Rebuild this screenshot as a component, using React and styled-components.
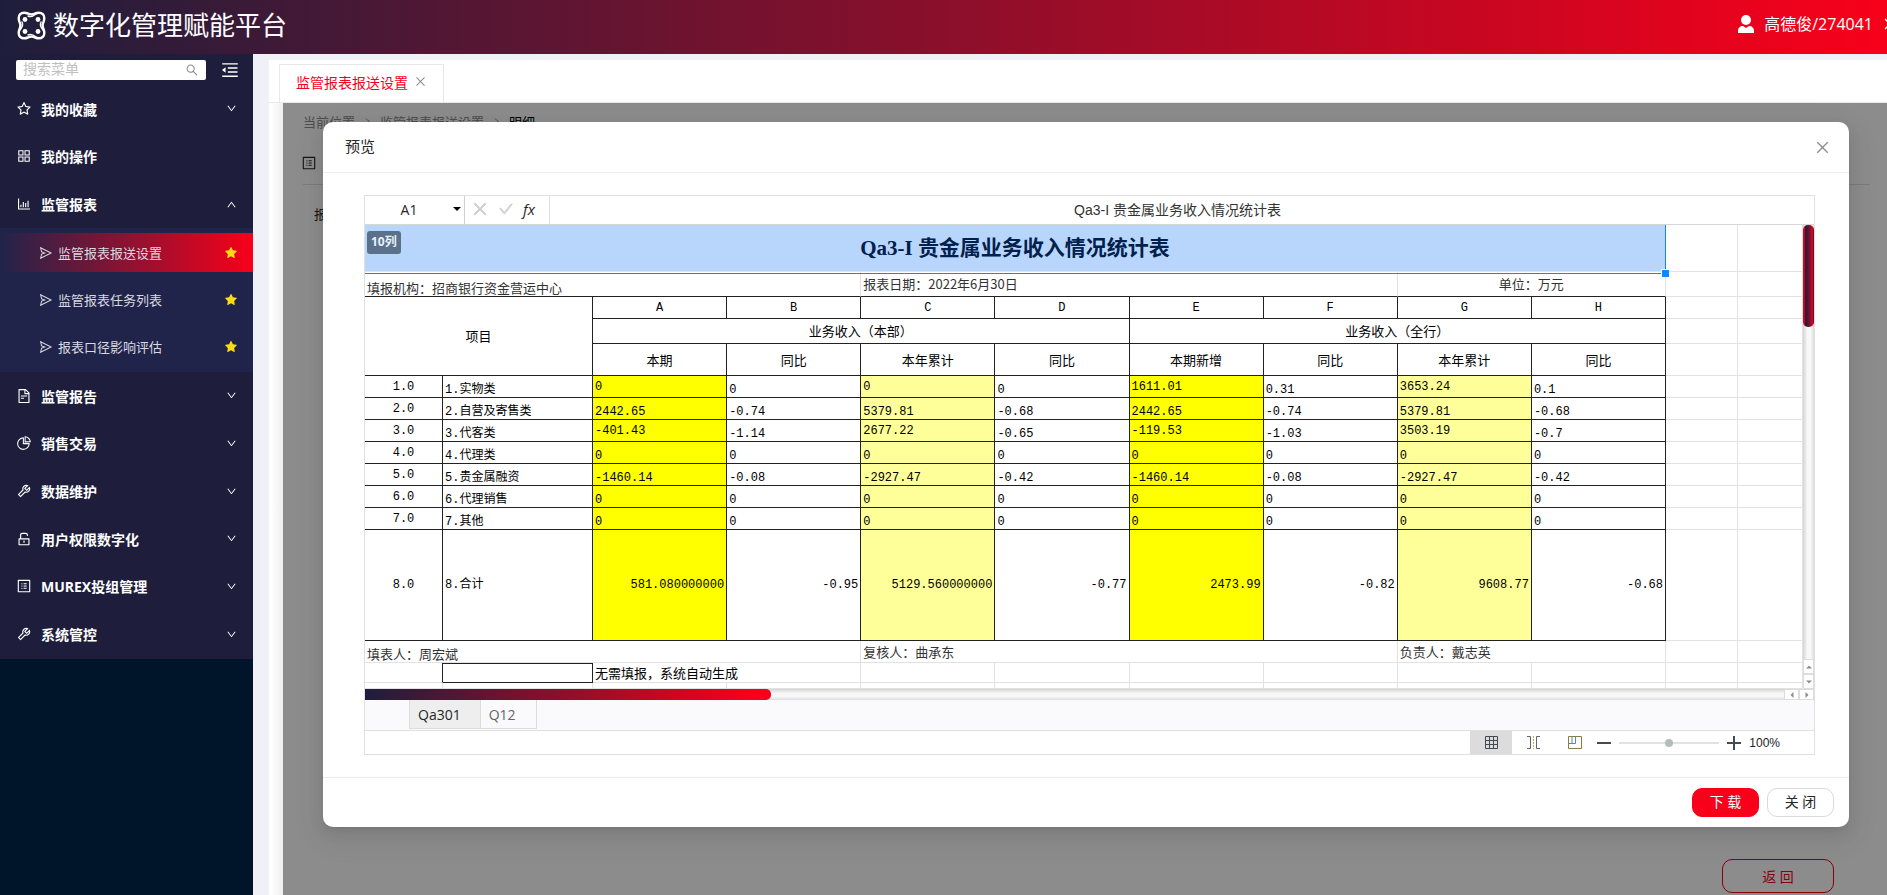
import React, { useState } from "react";
import styled, { createGlobalStyle, css } from "styled-components";
import {
    AiFillStar,
    AiOutlineAppstore,
    AiOutlineBarChart,
    AiOutlineCheck,
    AiOutlineClose,
    AiOutlineDown,
    AiOutlineFileText,
    AiOutlineMenuFold,
    AiOutlinePieChart,
    AiOutlineProfile,
    AiOutlineRight,
    AiOutlineSearch,
    AiOutlineSend,
    AiOutlineStar,
    AiOutlineTool,
    AiOutlineUnlock,
    AiOutlineUp,
} from "react-icons/ai";

const GlobalStyle = createGlobalStyle`
    * {
        box-sizing: border-box;
    }
    body {
        margin: 0;
        font-family: "Open Sans", "Noto Sans CJK SC", sans-serif;
        font-size: 14px;
        color: #262626;
        overflow: hidden;
    }
    button, input {
        font-family: inherit;
        padding: 0;
        margin: 0;
    }
    button {
        cursor: pointer;
    }
    svg {
        display: block;
        flex-shrink: 0;
    }
`;

const Layout = styled('div')`
    display: flex;
    flex-direction: column;
    height: 100vh;
`;

const Header = styled('header')`
    display: flex;
    align-items: center;
    justify-content: space-between;
    flex: 0 0 54px;
    padding: 0 0 4px 17px;
    overflow: hidden;
    color: #fff;
    background: linear-gradient(90deg, #1e1e3c 0%, #f8001a 100%);
`;

const Brand = styled('div')`
    display: flex;
    align-items: center;
    gap: 7px;
    h1 {
        margin: 0;
        font-size: 26px;
        line-height: 36px;
        font-weight: normal;
    }
`;

const User = styled('div')`
    display: flex;
    align-items: center;
    gap: 10px;
    margin-right: -11px;
    padding-bottom: 2px;
    font-size: 16px;
    line-height: 24px;
    .logout {
        margin-left: -1px;
    }
`;

const Main = styled('div')`
    display: flex;
    flex: 1;
    min-height: 0;
`;

const Sidebar = styled('aside')`
    flex: 0 0 253px;
    min-width: 0;
    background: #001529;
`;

const SearchRow = styled('div')`
    display: flex;
    align-items: center;
    gap: 14px;
    height: 31px;
    padding: 0 13px 0 16px;
    background: #1e1e3c;
    color: #fff;
`;

const SearchBox = styled('label')`
    display: flex;
    align-items: center;
    flex: 1;
    min-width: 0;
    height: 20px;
    padding: 0 7px;
    border-radius: 2px;
    background: #fff;
    color: #8c8c8c;
    input {
        flex: 1;
        min-width: 0;
        height: 20px;
        padding-bottom: 2px;
        border: none;
        outline: none;
        background: none;
        font-size: 14px;
    }
    input::placeholder {
        color: #bfbfbf;
    }
`;

const PlainButton = styled('button')`
    border: none;
    background: none;
    color: inherit;
    line-height: 0;
`;

const Menu = styled('nav')`
    padding-bottom: 1px;
    background: #1e1e3c;
`;

const MenuGroup = styled('div')`
    display: grid;
    grid-auto-rows: 1fr;
    height: ${p => p.$height}px;
`;

const MenuItem = styled('button')`
    display: flex;
    align-items: center;
    gap: 9px;
    width: 100%;
    padding: 0 16px;
    border: none;
    background: none;
    color: #fff;
    font-size: 14px;
    font-weight: bold;
    text-align: left;
    span {
        flex: 1;
    }
`;

const SubMenu = styled('div')`
    display: grid;
    gap: 8px;
    padding: 5px 0 6px;
    background: #21244a;
`;

const SubItem = styled('a')`
    display: flex;
    align-items: center;
    gap: 5px;
    height: 39px;
    padding: 0 15px 0 39px;
    font-size: 13px;
    color: #d9d9e0;
    text-decoration: none;
    background: ${p => p.$active ? 'linear-gradient(90deg, #21244a 0%, #f8001a 100%)' : 'none'};
    span {
        flex: 1;
    }
    .star {
        color: #fadb14;
    }
`;

const Workspace = styled('main')`
    display: flex;
    flex-direction: column;
    flex: 1;
    min-width: 0;
    padding: 6px 0 0 16px;
    background: #f0f1f6;
`;

const TabBar = styled('div')`
    flex: 0 0 43px;
    display: flex;
    padding: 4px 0 0 10px;
    background: #fff;
    border-bottom: 1px solid #e8e8e8;
`;

const PageTab = styled('div')`
    display: flex;
    align-items: center;
    gap: 6px;
    height: 38px;
    padding: 0 16px 4px 16px;
    border: 1px solid #e8e8e8;
    border-bottom: none;
    background: #fff;
    color: #f8001a;
    font-size: 14px;
    button {
        color: #8c8c8c;
    }
`;

const Stage = styled('div')`
    flex: 1;
    min-height: 0;
    padding-left: 14px;
    background: linear-gradient(90deg, #fff 0, #fff 2px, #eee 14px);
`;

const Page = styled('section')`
    position: relative;
    height: 100%;
    padding: 8px 17px 0 20px;
    display: flex;
    flex-direction: column;
    background: #fff;
`;

const Breadcrumb = styled('div')`
    display: flex;
    align-items: center;
    gap: 8px;
    height: 20px;
    font-size: 13px;
    color: #8c8c8c;
    strong {
        font-weight: normal;
        color: #000;
    }
`;

const PageHead = styled('div')`
    margin-top: 24px;
    height: 30px;
    border-bottom: 1px solid #e0e0e0;
    svg {
        margin-left: -2px;
    }
`;

const PageField = styled('div')`
    flex: 1;
    padding: 19px 11px;
    font-size: 13px;
`;

const PageFoot = styled('div')`
    display: flex;
    justify-content: flex-end;
    padding: 0 36px 2px 0;
`;

const BackButton = styled('button')`
    width: 112px;
    height: 34px;
    border: 1px solid #f8001a;
    border-radius: 10px;
    background: #fff;
    color: #f8001a;
    font-size: 14px;
`;

// the mask only covers the page, the menu and the tabs stay usable
const Mask = styled('div')`
    position: absolute;
    inset: 0;
    padding: 19px 38px 0 40px;
    background: rgba(0, 0, 0, 0.45);
`;

const Dialog = styled('div')`
    border-radius: 10px;
    background: #fff;
    box-shadow: 0 3px 6px -4px rgba(0, 0, 0, 0.12), 0 6px 16px rgba(0, 0, 0, 0.08),
        0 9px 28px 8px rgba(0, 0, 0, 0.05);
`;

const DialogHead = styled('div')`
    display: flex;
    align-items: center;
    justify-content: space-between;
    height: 51px;
    padding: 0 18px 0 22px;
    border-bottom: 1px solid #ececec;
    h2 {
        margin: 0;
        padding-bottom: 3px;
        font-size: 15px;
        font-weight: normal;
    }
    button {
        color: #8c8c8c;
    }
`;

const DialogBody = styled('div')`
    padding: 22px 34px 22px 41px;
`;

const DialogFoot = styled('div')`
    display: flex;
    justify-content: flex-end;
    gap: 8px;
    padding: 10px 15px;
    border-top: 1px solid #ececec;
`;

const ActionButton = styled('button')`
    width: 67px;
    height: 29px;
    padding-bottom: 2px;
    border: 1px solid ${p => p.$primary ? '#f8001a' : '#d9d9d9'};
    border-radius: 10px;
    background: ${p => p.$primary ? '#f8001a' : '#fff'};
    color: ${p => p.$primary ? '#fff' : '#262626'};
    font-size: 14px;
    line-height: 20px;
`;

const Spreadsheet = styled('div')`
    border: 1px solid #e0e0e0;
    color: #000;
`;

const FormulaBar = styled('div')`
    display: flex;
    height: 29px;
    border-bottom: 1px solid #d4d8d8;
`;

const NameBox = styled('div')`
    display: flex;
    align-items: center;
    width: 100px;
    padding: 0 3px 2px 0;
    border-right: 1px solid #d0d0d0;
    input {
        flex: 1;
        min-width: 0;
        border: none;
        outline: none;
        text-align: center;
        font-size: 14px;
        color: #262626;
    }
`;

const FormulaTools = styled('div')`
    display: flex;
    align-items: center;
    gap: 9px;
    width: 85px;
    padding: 0 0 2px 6px;
    border-right: 1px solid #e0e0e0;
    color: #d0d0d0;
    svg {
        stroke: currentColor;
        stroke-width: 50px;
    }
    em {
        font-size: 15px;
        line-height: 20px;
        color: #262626;
    }
`;

const FormulaInput = styled('input')`
    flex: 1;
    min-width: 0;
    height: 25px;
    padding-right: 9px;
    border: none;
    outline: none;
    text-align: center;
    font-family: "Liberation Sans", "Noto Sans CJK SC", sans-serif;
    font-size: 14px;
    color: #333;
`;

const SheetView = styled('div')`
    display: flex;
    height: 464px;
`;

const Grid = styled('table')`
    flex: 1;
    min-width: 0;
    width: 100%;
    height: 464px;
    table-layout: fixed;
    border-collapse: separate;
    border-spacing: 0;
`;

const Row = styled('tr')`
    height: ${p => p.$h}px;
`;

const Cell = styled('td')`
    position: relative;
    padding: 0 2px;
    border-right: 1px solid ${p => p.$line || '#e2e2e2'};
    border-bottom: 1px solid ${p => p.$base || p.$line || '#e2e2e2'};
    text-align: ${p => p.$align || 'left'};
    vertical-align: ${p => p.$valign || 'middle'};
    background: ${p => p.$fill || '#fff'};
    font-size: 13px;
    line-height: 16px;
    font-weight: normal;
    white-space: nowrap;
    ${p => p.$num && css`
        font-family: "Liberation Mono", "Noto Sans CJK SC", monospace;
        font-size: 12px;
        line-height: 14px;
    `}
    ${p => p.$note && css`
        color: #333;
        font-family: "Noto Sans CJK SC", sans-serif;
    `}
    ${p => p.$boxed && css`
        border-top: 1px solid #222;
    `}
`;

const TitleCell = styled(Cell)`
    border-right-color: #fff;
    background: #b8d6fb;
    color: #00204d;
    font-family: "Liberation Serif", "Noto Sans CJK SC", serif;
    font-size: 21px;
    line-height: 30px;
    font-weight: bold;
    text-align: center;
`;

const Selection = styled('div')`
    position: absolute;
    z-index: 1;
    inset: 0 -1px -3px 0;
    border-right: 1px solid #0f87ff;
    border-bottom: 1px solid #0f87ff;
    &::after {
        content: "";
        position: absolute;
        right: -4px;
        bottom: -4px;
        width: 7px;
        height: 7px;
        background: #0f87ff;
        border: 1px solid #fff;
        border-width: 1px 0 0 1px;
    }
`;

const ColumnBadge = styled('span')`
    position: absolute;
    top: 6px;
    left: 2px;
    height: 23px;
    padding: 0 4px;
    border-radius: 3px;
    background: #5b7089;
    color: #e8f1fb;
    font-family: "Open Sans", "Noto Sans CJK SC", sans-serif;
    font-size: 12px;
    line-height: 21px;
`;

const VScroll = styled('div')`
    display: flex;
    flex-direction: column;
    flex: 0 0 11px;
    background: linear-gradient(90deg, #d4d4d4, #f8f8f8 40%, #f8f8f8 70%, #dcdcdc);
`;

const VThumb = styled('div')`
    height: 102px;
    margin-bottom: auto;
    border-radius: 5px;
    background: linear-gradient(90deg, #e3001b 0%, #d4001b 14%, #1e1e3c 24%, #6a1430 55%, #e3001b 86%, #1e1e3c 100%);
`;

const HScroll = styled('div')`
    display: flex;
    height: 11px;
    background: linear-gradient(180deg, #d4d4d4, #f8f8f8 40%, #f8f8f8 70%, #dcdcdc);
`;

const HThumb = styled('div')`
    width: 28%;
    margin-right: auto;
    border-radius: 0 5px 5px 0;
    background: linear-gradient(90deg, #1e1e3c 0%, #f8001a 95%);
`;

const ScrollButton = styled('button')`
    display: flex;
    align-items: center;
    justify-content: center;
    width: ${p => p.$tall ? 11 : 15}px;
    height: ${p => p.$tall ? 15 : 11}px;
    border: 1px solid #dcdcdc;
    background: #fff;
    color: #8c8c8c;
`;

const SheetTabs = styled('div')`
    display: flex;
    height: 31px;
    padding-left: 44px;
    border-bottom: 1px solid #e0e0e0;
    background: #fafafc;
`;

const SheetTab = styled('button')`
    height: 29px;
    padding: 0 ${p => p.$active ? 19 : 20}px 0 8px;
    border: 1px solid #dcdcdc;
    border-top: none;
    border-left-width: ${p => p.$active ? 1 : 0}px;
    background: ${p => p.$active ? '#eee' : '#fafafc'};
    color: ${p => p.$active ? '#262626' : '#666'};
    font-size: 14px;
`;

const StatusBar = styled('div')`
    display: flex;
    justify-content: flex-end;
    align-items: center;
    height: 23px;
    padding-right: 34px;
    color: #434a54;
`;

const ViewButton = styled('button')`
    display: flex;
    align-items: center;
    justify-content: center;
    width: 42px;
    height: 23px;
    border: none;
    background: ${p => p.$active ? '#dcdcdc' : '#fff'};
`;

const Zoom = styled('div')`
    display: flex;
    align-items: center;
    gap: 8px;
    margin-left: 1px;
    font-family: "Liberation Sans", sans-serif;
    font-size: 12px;
    color: #222;
    input {
        appearance: none;
        width: 100px;
        height: 15px;
        background: linear-gradient(#dfe3e8, #dfe3e8) center / 100% 2px no-repeat;
    }
    input::-webkit-slider-thumb {
        appearance: none;
        width: 8px;
        height: 8px;
        border-radius: 50%;
        background: #b4bdb8;
    }
`;

const Logo = () => (
    <svg width="29" height="29" viewBox="0 0 29 29" fill="none" stroke="#fff" strokeWidth="2.400" strokeLinecap="round">
        <path d="M2.500 11 C0 4 4 0 11 2.500 C13 3.500 16 3.500 18 2.500 C25 0 29 4 26.500 11 C25.500 13 25.500 16 26.500 18 C29 25 25 29 18 26.500 C16 25.500 13 25.500 11 26.500 C4 29 0 25 2.500 18 C3.500 16 3.500 13 2.500 11 Z" />
        <path d="M11 5 C13 6 16 5.500 19 3 M11 24 C13 23 16 23.500 19 26" strokeWidth="1.400" />
        <path d="M5 11 C6 13 5.500 16 3 19 M24 11 C23 13 23.500 16 26 19" strokeWidth="1.400" />
        <g fill="#fff" stroke="none">
            <circle cx="8" cy="8.500" r="2.400" />
            <circle cx="21" cy="8.500" r="2.400" />
            <circle cx="8" cy="20.500" r="2.400" />
            <circle cx="21" cy="20.500" r="2.400" />
        </g>
    </svg>
);

const Person = () => (
    <svg width="16" height="18" viewBox="0 0 16 18" fill="#fff">
        <circle cx="8" cy="5" r="5" />
        <path d="M0 18 V16 C0 13 2 11 5 11 L8 13 L11 11 C14 11 16 13 16 16 V18 Z" />
    </svg>
);

const Triangle = ({ dir, size = 6 }) => {
    const turn = { up: 180, down: 0, left: 90, right: 270 }[dir];
    return (
        <svg width={size} height={size} viewBox="0 0 8 8" fill="currentColor">
            <path d="M0 2 H8 L4 6 Z" transform={`rotate(${turn} 4 4)`} />
        </svg>
    );
};

const GridIcon = () => (
    <svg width="13" height="13" viewBox="0 0 13 13" fill="none" stroke="#434a54">
        <path d="M.5 .5 H12.500 V12.500 H.5 Z M.5 4.500 H12.500 M.5 8.500 H12.500 M4.500 .5 V12.500 M8.500 .5 V12.500" />
    </svg>
);

const BreakIcon = () => (
    <svg width="13" height="13" viewBox="0 0 13 13" fill="none" stroke="#5f6670">
        <path d="M0 .5 H3.500 V12.500 H0 M13 .5 H9.500 V12.500 H13" />
        <path d="M6.500 0 V13" stroke="#d9a441" strokeDasharray="2 1" />
    </svg>
);

const LayoutIcon = () => (
    <svg width="14" height="13" viewBox="0 0 14 13" fill="none">
        <path d="M.5 .5 H13.500 V12.500 H.5 Z" stroke="#8a7a45" />
        <path d="M.5 7.500 H7.500 V.5 M4 .5 V7" stroke="#5b86b8" />
    </svg>
);

const menuTop = [
    { icon: AiOutlineStar, text: '我的收藏', arrow: AiOutlineDown },
    { icon: AiOutlineAppstore, text: '我的操作' },
    { icon: AiOutlineBarChart, text: '监管报表', arrow: AiOutlineUp },
];

const subItems = ['监管报表报送设置', '监管报表任务列表', '报表口径影响评估'];

const menuBottom = [
    { icon: AiOutlineFileText, text: '监管报告', arrow: AiOutlineDown },
    { icon: AiOutlinePieChart, text: '销售交易', arrow: AiOutlineDown },
    { icon: AiOutlineTool, text: '数据维护', arrow: AiOutlineDown },
    { icon: AiOutlineUnlock, text: '用户权限数字化', arrow: AiOutlineDown },
    { icon: AiOutlineProfile, text: 'MUREX投组管理', arrow: AiOutlineDown },
    { icon: AiOutlineTool, text: '系统管控', arrow: AiOutlineDown },
];

const letters = ['A', 'B', 'C', 'D', 'E', 'F', 'G', 'H'];
const heads = ['本期', '同比', '本年累计', '同比', '本期新增', '同比', '本年累计', '同比'];
const fills = ['#ffff00', null, '#ffff99', null, '#ffff00', null, '#ffff99', null];

const rows = [
    { no: '1.0', name: '1.实物类', high: true, v: ['0', '0', '0', '0', '1611.01', '0.31', '3653.24', '0.1'] },
    { no: '2.0', name: '2.自营及寄售类', v: ['2442.65', '-0.74', '5379.81', '-0.68', '2442.65', '-0.74', '5379.81', '-0.68'] },
    { no: '3.0', name: '3.代客类', high: true, v: ['-401.43', '-1.14', '2677.22', '-0.65', '-119.53', '-1.03', '3503.19', '-0.7'] },
    { no: '4.0', name: '4.代理类', v: ['0', '0', '0', '0', '0', '0', '0', '0'] },
    { no: '5.0', name: '5.贵金属融资', v: ['-1460.14', '-0.08', '-2927.47', '-0.42', '-1460.14', '-0.08', '-2927.47', '-0.42'] },
    { no: '6.0', name: '6.代理销售', v: ['0', '0', '0', '0', '0', '0', '0', '0'] },
    { no: '7.0', name: '7.其他', v: ['0', '0', '0', '0', '0', '0', '0', '0'] },
];
const total = ['581.080000000', '-0.95', '5129.560000000', '-0.77', '2473.99', '-0.82', '9608.77', '-0.68'];

const INK = '#222';
const PALE = '#e2e2e2';

const Blank = () => (
    <>
        <Cell />
        <Cell />
    </>
);

const MenuList = ({ items, height }) => (
    <MenuGroup $height={height}>
        {items.map(({ icon: Icon, text, arrow: Arrow }) => (
            <MenuItem key={text} type="button">
                <Icon size={16} />
                <span>{text}</span>
                {Arrow && <Arrow size={11} />}
            </MenuItem>
        ))}
    </MenuGroup>
);

const ReportGrid = () => (
    <Grid>
        <colgroup>
            <col style={{ width: 78 }} />
            <col style={{ width: 150 }} />
            {letters.map(l => <col key={l} />)}
            <col style={{ width: 72 }} />
            <col style={{ width: 65 }} />
        </colgroup>
        <tbody>
            <Row $h={47}>
                <TitleCell colSpan={10}>
                    Qa3-I 贵金属业务收入情况统计表
                    <Selection />
                    <ColumnBadge>10列</ColumnBadge>
                </TitleCell>
                <Blank />
            </Row>
            <Row $h={25}>
                <Cell colSpan={4} $note $valign="bottom" $base={INK}>填报机构：招商银行资金营运中心</Cell>
                <Cell colSpan={4} $note $base={INK}>报表日期：2022年6月30日</Cell>
                <Cell colSpan={2} $note $align="center" $base={INK}>单位：万元</Cell>
                <Blank />
            </Row>
            <Row $h={22}>
                <Cell as="th" colSpan={2} rowSpan={3} $align="center" $line={INK}>项目</Cell>
                {letters.map(l => <Cell as="th" key={l} $num $align="center" $line={INK}>{l}</Cell>)}
                <Blank />
            </Row>
            <Row $h={25}>
                <Cell as="th" colSpan={4} $align="center" $line={INK}>业务收入（本部）</Cell>
                <Cell as="th" colSpan={4} $align="center" $line={INK}>业务收入（全行）</Cell>
                <Blank />
            </Row>
            <Row $h={32}>
                {heads.map((h, i) => <Cell as="th" key={i} $align="center" $line={INK}>{h}</Cell>)}
                <Blank />
            </Row>
            {rows.map(r => (
                <Row key={r.no} $h={22}>
                    <Cell $num $align="center" $line={INK}>{r.no}</Cell>
                    <Cell $num $valign="bottom" $line={INK}>{r.name}</Cell>
                    {r.v.map((v, i) => (
                        <Cell
                            key={i}
                            $num
                            $line={INK}
                            $fill={fills[i]}
                            $valign={r.high && fills[i] ? 'middle' : 'bottom'}
                        >
                            {v}
                        </Cell>
                    ))}
                    <Blank />
                </Row>
            ))}
            <Row $h={111}>
                <Cell $num $align="center" $line={INK}>8.0</Cell>
                <Cell $num $line={INK}>8.合计</Cell>
                {total.map((v, i) => (
                    <Cell key={i} $num $align="right" $line={INK} $fill={fills[i]}>{v}</Cell>
                ))}
                <Blank />
            </Row>
            <Row $h={22}>
                <Cell colSpan={4} $note $valign="bottom">填表人：周宏斌</Cell>
                <Cell colSpan={4} $note>复核人：曲承东</Cell>
                <Cell colSpan={2} $note>负责人：戴志英</Cell>
                <Blank />
            </Row>
            <Row $h={20}>
                <Cell $line={INK} $base={PALE} />
                <Cell $line={INK} $boxed />
                <Cell colSpan={2}>无需填报，系统自动生成</Cell>
                {letters.slice(2).map(l => <Cell key={l} />)}
                <Blank />
            </Row>
            <Row $h={6}>
                {letters.map(l => <Cell key={l} />)}
                <Blank />
                <Blank />
            </Row>
        </tbody>
    </Grid>
);

const App = () => {
    const [sheet, setSheet] = useState('Qa301');
    const [zoom, setZoom] = useState(100);

    return (
        <Layout>
            <GlobalStyle />
            <Header>
                <Brand>
                    <Logo />
                    <h1>数字化管理赋能平台</h1>
                </Brand>
                <User>
                    <Person />
                    <span>高德俊/274041</span>
                    <AiOutlineClose className="logout" size={16} />
                </User>
            </Header>
            <Main>
                <Sidebar>
                    <SearchRow>
                        <SearchBox>
                            <input type="text" placeholder="搜索菜单" aria-label="搜索菜单" />
                            <AiOutlineSearch size={14} />
                        </SearchBox>
                        <PlainButton type="button" aria-label="收起菜单">
                            <AiOutlineMenuFold size={20} />
                        </PlainButton>
                    </SearchRow>
                    <Menu>
                        <MenuList items={menuTop} height={143} />
                        <SubMenu>
                            {subItems.map((text, i) => (
                                <SubItem key={text} href="#" $active={i === 0}>
                                    <AiOutlineSend size={14} />
                                    <span>{text}</span>
                                    <AiFillStar className="star" size={14} />
                                </SubItem>
                            ))}
                        </SubMenu>
                        <MenuList items={menuBottom} height={286} />
                    </Menu>
                </Sidebar>
                <Workspace>
                    <TabBar>
                        <PageTab>
                            <span>监管报表报送设置</span>
                            <PlainButton type="button" aria-label="关闭标签">
                                <AiOutlineClose size={13} />
                            </PlainButton>
                        </PageTab>
                    </TabBar>
                    <Stage>
                        <Page>
                            <Breadcrumb>
                                <span>当前位置</span>
                                <AiOutlineRight size={9} />
                                <span>监管报表报送设置</span>
                                <AiOutlineRight size={9} />
                                <strong>明细</strong>
                            </Breadcrumb>
                            <PageHead>
                                <AiOutlineProfile size={16} />
                            </PageHead>
                            <PageField>报表</PageField>
                            <PageFoot>
                                <BackButton type="button">返 回</BackButton>
                            </PageFoot>
                            <Mask>
                                <Dialog role="dialog" aria-label="预览">
                                    <DialogHead>
                                        <h2>预览</h2>
                                        <PlainButton type="button" aria-label="关闭">
                                            <AiOutlineClose size={17} />
                                        </PlainButton>
                                    </DialogHead>
                                    <DialogBody>
                                        <Spreadsheet>
                                            <FormulaBar>
                                                <NameBox>
                                                    <input type="text" defaultValue="A1" aria-label="名称框" />
                                                    <Triangle dir="down" size={8} />
                                                </NameBox>
                                                <FormulaTools>
                                                    <AiOutlineClose size={18} />
                                                    <AiOutlineCheck size={16} />
                                                    <em>fx</em>
                                                </FormulaTools>
                                                <FormulaInput
                                                    type="text"
                                                    defaultValue="Qa3-I 贵金属业务收入情况统计表"
                                                    aria-label="编辑栏"
                                                />
                                            </FormulaBar>
                                            <SheetView>
                                                <ReportGrid />
                                                <VScroll>
                                                    <VThumb />
                                                    <ScrollButton $tall type="button" aria-label="向上">
                                                        <Triangle dir="up" />
                                                    </ScrollButton>
                                                    <ScrollButton $tall type="button" aria-label="向下">
                                                        <Triangle dir="down" />
                                                    </ScrollButton>
                                                </VScroll>
                                            </SheetView>
                                            <HScroll>
                                                <HThumb />
                                                <ScrollButton type="button" aria-label="向左">
                                                    <Triangle dir="left" />
                                                </ScrollButton>
                                                <ScrollButton type="button" aria-label="向右">
                                                    <Triangle dir="right" />
                                                </ScrollButton>
                                            </HScroll>
                                            <SheetTabs>
                                                {['Qa301', 'Q12'].map(name => (
                                                    <SheetTab
                                                        key={name}
                                                        type="button"
                                                        $active={sheet === name}
                                                        onClick={() => setSheet(name)}
                                                    >
                                                        {name}
                                                    </SheetTab>
                                                ))}
                                            </SheetTabs>
                                            <StatusBar>
                                                <ViewButton $active type="button" aria-label="普通"><GridIcon /></ViewButton>
                                                <ViewButton type="button" aria-label="分页预览"><BreakIcon /></ViewButton>
                                                <ViewButton type="button" aria-label="页面布局"><LayoutIcon /></ViewButton>
                                                <Zoom>
                                                    <PlainButton type="button" aria-label="缩小">
                                                        <svg width="14" height="14" viewBox="0 0 14 14" stroke="#434a54" strokeWidth="2">
                                                            <path d="M0 7 H14" />
                                                        </svg>
                                                    </PlainButton>
                                                    <input
                                                        type="range"
                                                        min="0"
                                                        max="200"
                                                        value={zoom}
                                                        onChange={e => setZoom(Number(e.target.value))}
                                                        aria-label="缩放"
                                                    />
                                                    <PlainButton type="button" aria-label="放大">
                                                        <svg width="14" height="14" viewBox="0 0 14 14" stroke="#434a54" strokeWidth="2">
                                                            <path d="M0 7 H14 M7 0 V14" />
                                                        </svg>
                                                    </PlainButton>
                                                    <span>{zoom}%</span>
                                                </Zoom>
                                            </StatusBar>
                                        </Spreadsheet>
                                    </DialogBody>
                                    <DialogFoot>
                                        <ActionButton $primary type="button">下 载</ActionButton>
                                        <ActionButton type="button">关 闭</ActionButton>
                                    </DialogFoot>
                                </Dialog>
                            </Mask>
                        </Page>
                    </Stage>
                </Workspace>
            </Main>
        </Layout>
    );
};

export default App;
